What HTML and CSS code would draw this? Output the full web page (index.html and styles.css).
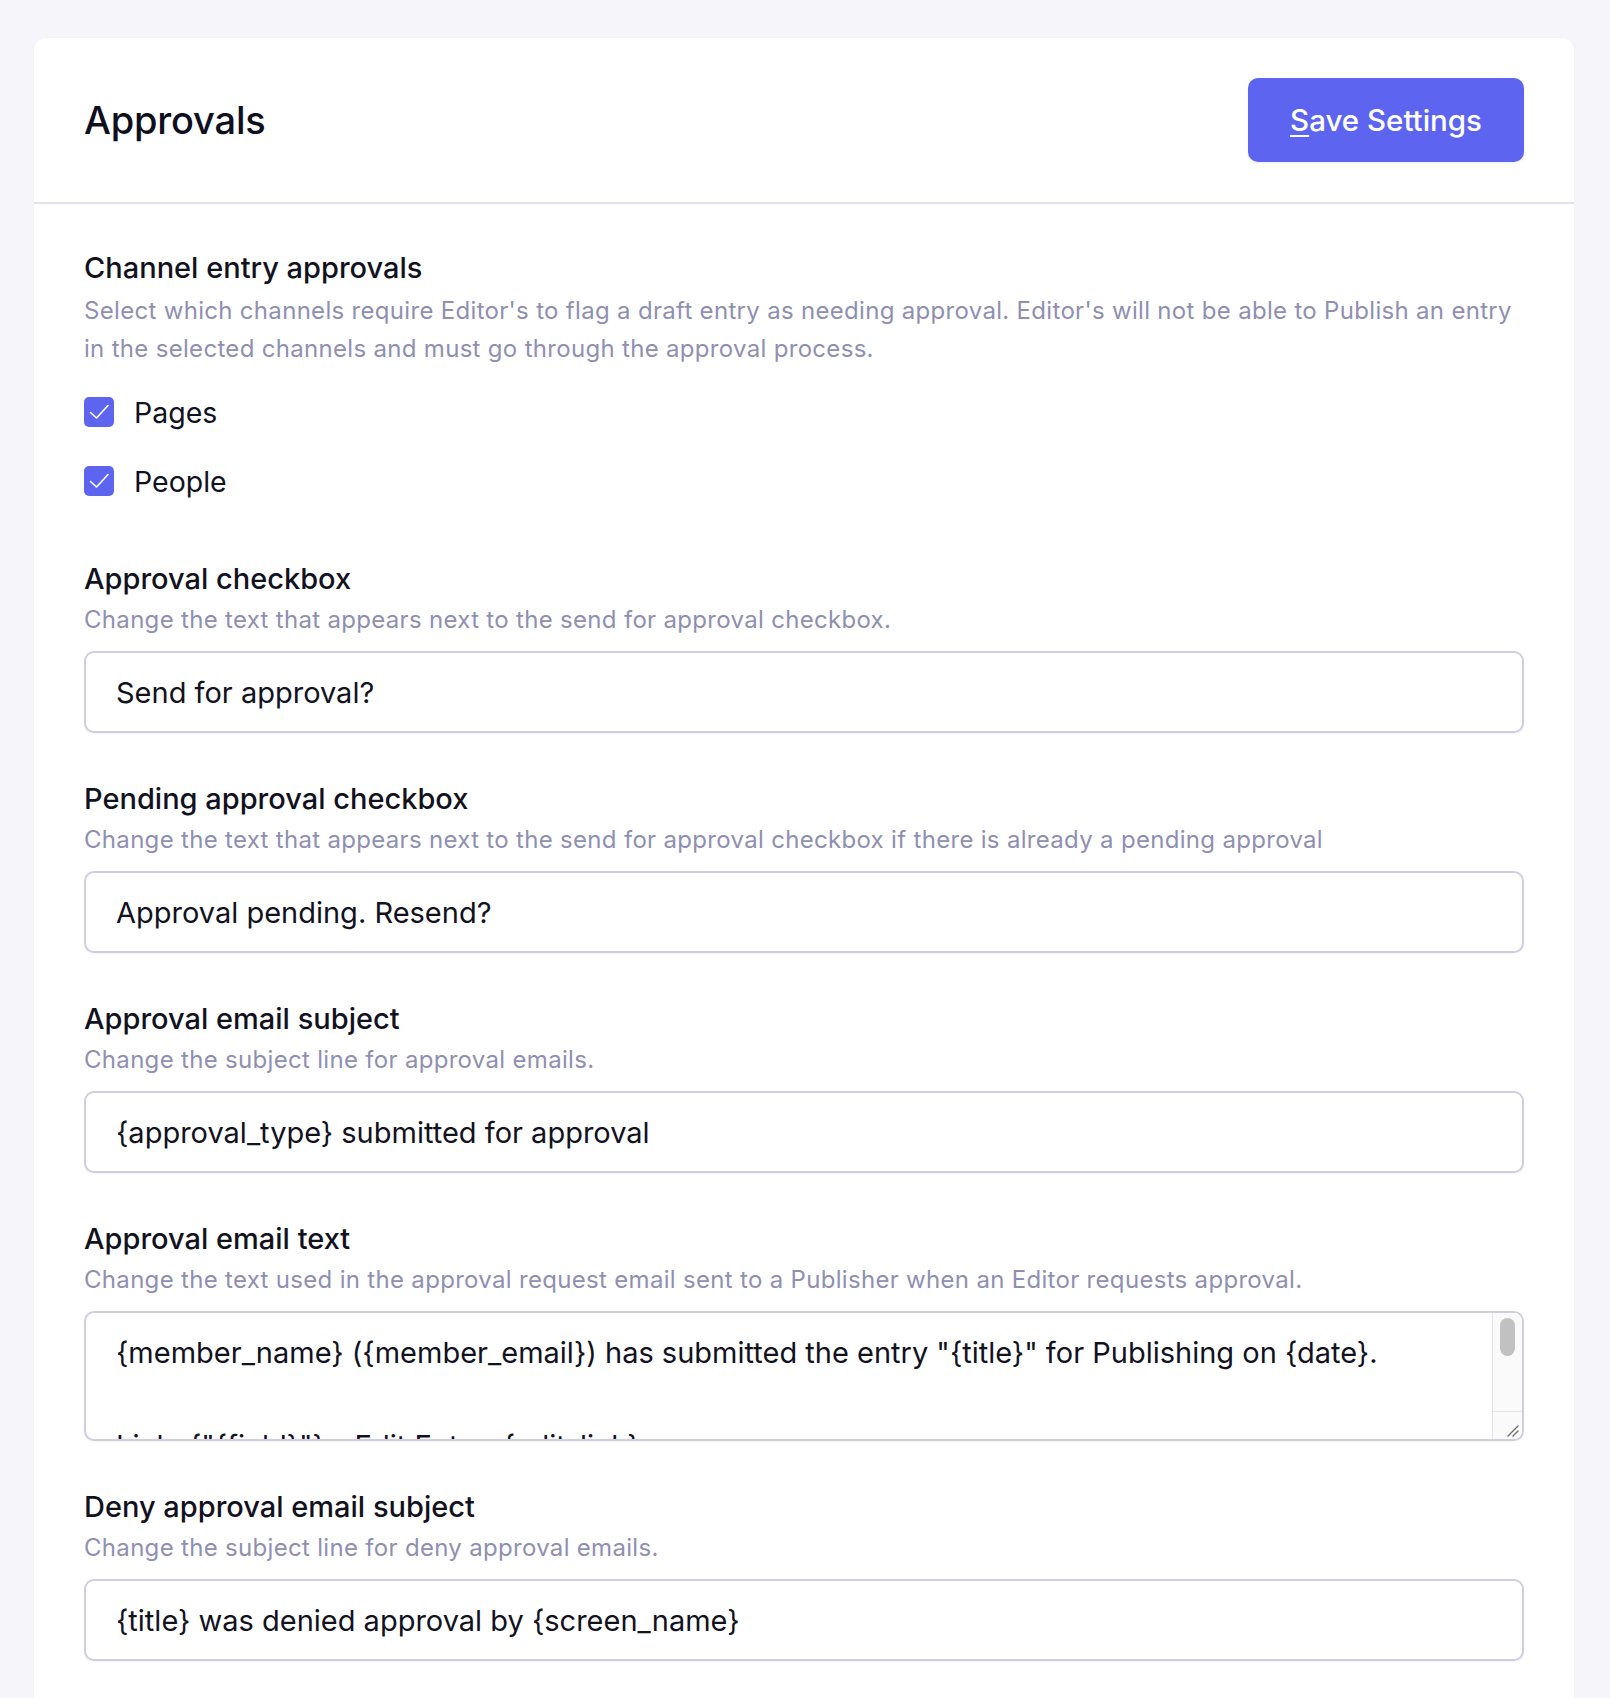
FILE: index.html
```html
<!DOCTYPE html>
<html lang="en">
<head>
<meta charset="utf-8">
<title>Approvals</title>
<link rel="stylesheet" href="styles.css">
</head>
<body>
<div class="card">
  <div class="card-header">
    <h1 class="title">Approvals</h1>
    <button class="btn-primary" type="button"><u>S</u>ave Settings</button>
  </div>
  <div class="card-body">
    <div class="field field-checks">
      <div class="field-label">Channel entry approvals</div>
      <div class="field-desc">Select which channels require Editor's to flag a draft entry as needing approval. Editor's will not be able to Publish an entry in the selected channels and must go through the approval process.</div>
      <div class="check-list">
        <label class="check-row">
          <span class="check-box"><svg viewBox="0 0 30 30" width="30" height="30"><path d="M6.5 15.5 L12.5 21 L24 8.5" fill="none" stroke="#fff" stroke-width="1.6" stroke-linecap="round" stroke-linejoin="round"/></svg></span>
          <span class="check-text">Pages</span>
        </label>
        <label class="check-row">
          <span class="check-box"><svg viewBox="0 0 30 30" width="30" height="30"><path d="M6.5 15.5 L12.5 21 L24 8.5" fill="none" stroke="#fff" stroke-width="1.6" stroke-linecap="round" stroke-linejoin="round"/></svg></span>
          <span class="check-text">People</span>
        </label>
      </div>
    </div>

    <div class="field">
      <div class="field-label">Approval checkbox</div>
      <div class="field-desc">Change the text that appears next to the send for approval checkbox.</div>
      <input class="text-input" type="text" value="Send for approval?">
    </div>

    <div class="field">
      <div class="field-label">Pending approval checkbox</div>
      <div class="field-desc">Change the text that appears next to the send for approval checkbox if there is already a pending approval</div>
      <input class="text-input" type="text" value="Approval pending. Resend?">
    </div>

    <div class="field">
      <div class="field-label">Approval email subject</div>
      <div class="field-desc">Change the subject line for approval emails.</div>
      <input class="text-input" type="text" value="{approval_type} submitted for approval">
    </div>

    <div class="field">
      <div class="field-label">Approval email text</div>
      <div class="field-desc">Change the text used in the approval request email sent to a Publisher when an Editor requests approval.</div>
      <div class="textarea-wrap">
        <textarea class="text-area">{member_name} ({member_email}) has submitted the entry "{title}" for Publishing on {date}.

Link: {"{field}"} - Edit Entry: {edit_link}

To review the entry visit: {link}

Thank you.</textarea>
        <div class="fake-scroll">
          <div class="fake-thumb"></div>
          <div class="fake-corner">
            <svg viewBox="0 0 28 28" width="28" height="28"><path d="M14 24 L24 14 M19 24 L24 19" stroke="#6e6e6e" stroke-width="1.4" stroke-linecap="round"/></svg>
          </div>
        </div>
      </div>
    </div>

    <div class="field">
      <div class="field-label">Deny approval email subject</div>
      <div class="field-desc">Change the subject line for deny approval emails.</div>
      <input class="text-input" type="text" value="{title} was denied approval by {screen_name}">
    </div>
  </div>
</div>
</body>
</html>
```

FILE: styles.css
```css
* {
  box-sizing: border-box;
}

html, body {
  margin: 0;
  padding: 0;
}

body {
  background: #f6f6fa;
  font-family: Inter, "Noto Sans", "Liberation Sans", sans-serif;
  color: #12121f;
  padding: 38px 36px 0 34px;
  overflow: hidden;
}

.card {
  background: #ffffff;
  border-radius: 12px;
  box-shadow: 0 1px 3px rgba(20, 20, 60, 0.05);
}

.card-header {
  display: flex;
  align-items: center;
  justify-content: space-between;
  padding: 40px 50px;
  border-bottom: 2px solid #e2e2ef;
}

.title {
  margin: 0;
  font-size: 38px;
  font-weight: 500;
  line-height: 84px;
  color: #0f0f1e;
  letter-spacing: -0.2px;
}

.btn-primary {
  height: 84px;
  padding: 0 42px;
  border: 0;
  border-radius: 10px;
  background: #5d65f0;
  color: #ffffff;
  font-family: Inter, "Noto Sans", "Liberation Sans", sans-serif;
  font-size: 29.5px;
  font-weight: 500;
  box-shadow: 0 1px 2px rgba(20, 20, 60, 0.08);
}

.btn-primary u {
  text-decoration-thickness: 2px;
  text-underline-offset: 4px;
}

.card-body {
  padding: 44px 50px 50px;
}

.field + .field {
  margin-top: 46px;
}

.field-checks {
  padding-bottom: 12px;
}

.field-label {
  font-size: 29px;
  font-weight: 500;
  line-height: 40px;
  color: #12121f;
}

.field-desc {
  margin-top: 2px;
  font-size: 24px;
  line-height: 38px;
  color: #8f8fb2;
  letter-spacing: 0.31px;
}

.field-checks .field-desc {
  margin-top: 4px;
}

.check-list {
  margin-top: 24px;
  display: flex;
  flex-direction: column;
  gap: 29px;
}

.check-row {
  display: flex;
  align-items: center;
  gap: 20px;
  height: 40px;
}

.check-box {
  width: 30px;
  height: 30px;
  border-radius: 5px;
  background: #5d65f0;
  display: flex;
}

.check-text {
  font-size: 28.5px;
  color: #12121f;
}

.text-input,
.text-area {
  display: block;
  width: 100%;
  border: 2px solid #cfcde2;
  border-radius: 10px;
  background: #ffffff;
  font-family: Inter, "Noto Sans", "Liberation Sans", sans-serif;
  font-size: 29px;
  color: #12121f;
  box-shadow: 0 1px 2px rgba(20, 20, 60, 0.05);
  outline: none;
}

.text-input {
  margin-top: 12px;
  height: 82px;
  padding: 0 30px;
}

.textarea-wrap {
  position: relative;
  margin-top: 12px;
}

.text-area {
  height: 130px;
  padding: 17px 60px 0 30px;
  line-height: 46.5px;
  resize: none;
  overflow: hidden;
}

.fake-scroll {
  position: absolute;
  top: 2px;
  right: 2px;
  bottom: 2px;
  width: 30px;
  background: #fafafa;
  border-left: 1px solid #e4e4e4;
  border-radius: 0 8px 8px 0;
}

.fake-thumb {
  position: absolute;
  top: 5px;
  left: 7px;
  width: 15px;
  height: 38px;
  border-radius: 8px;
  background: #c1c1c1;
}

.fake-corner {
  position: absolute;
  left: 0;
  right: 0;
  bottom: 0;
  height: 28px;
  border-top: 1px solid #e4e4e4;
  display: flex;
  justify-content: flex-end;
}
```
